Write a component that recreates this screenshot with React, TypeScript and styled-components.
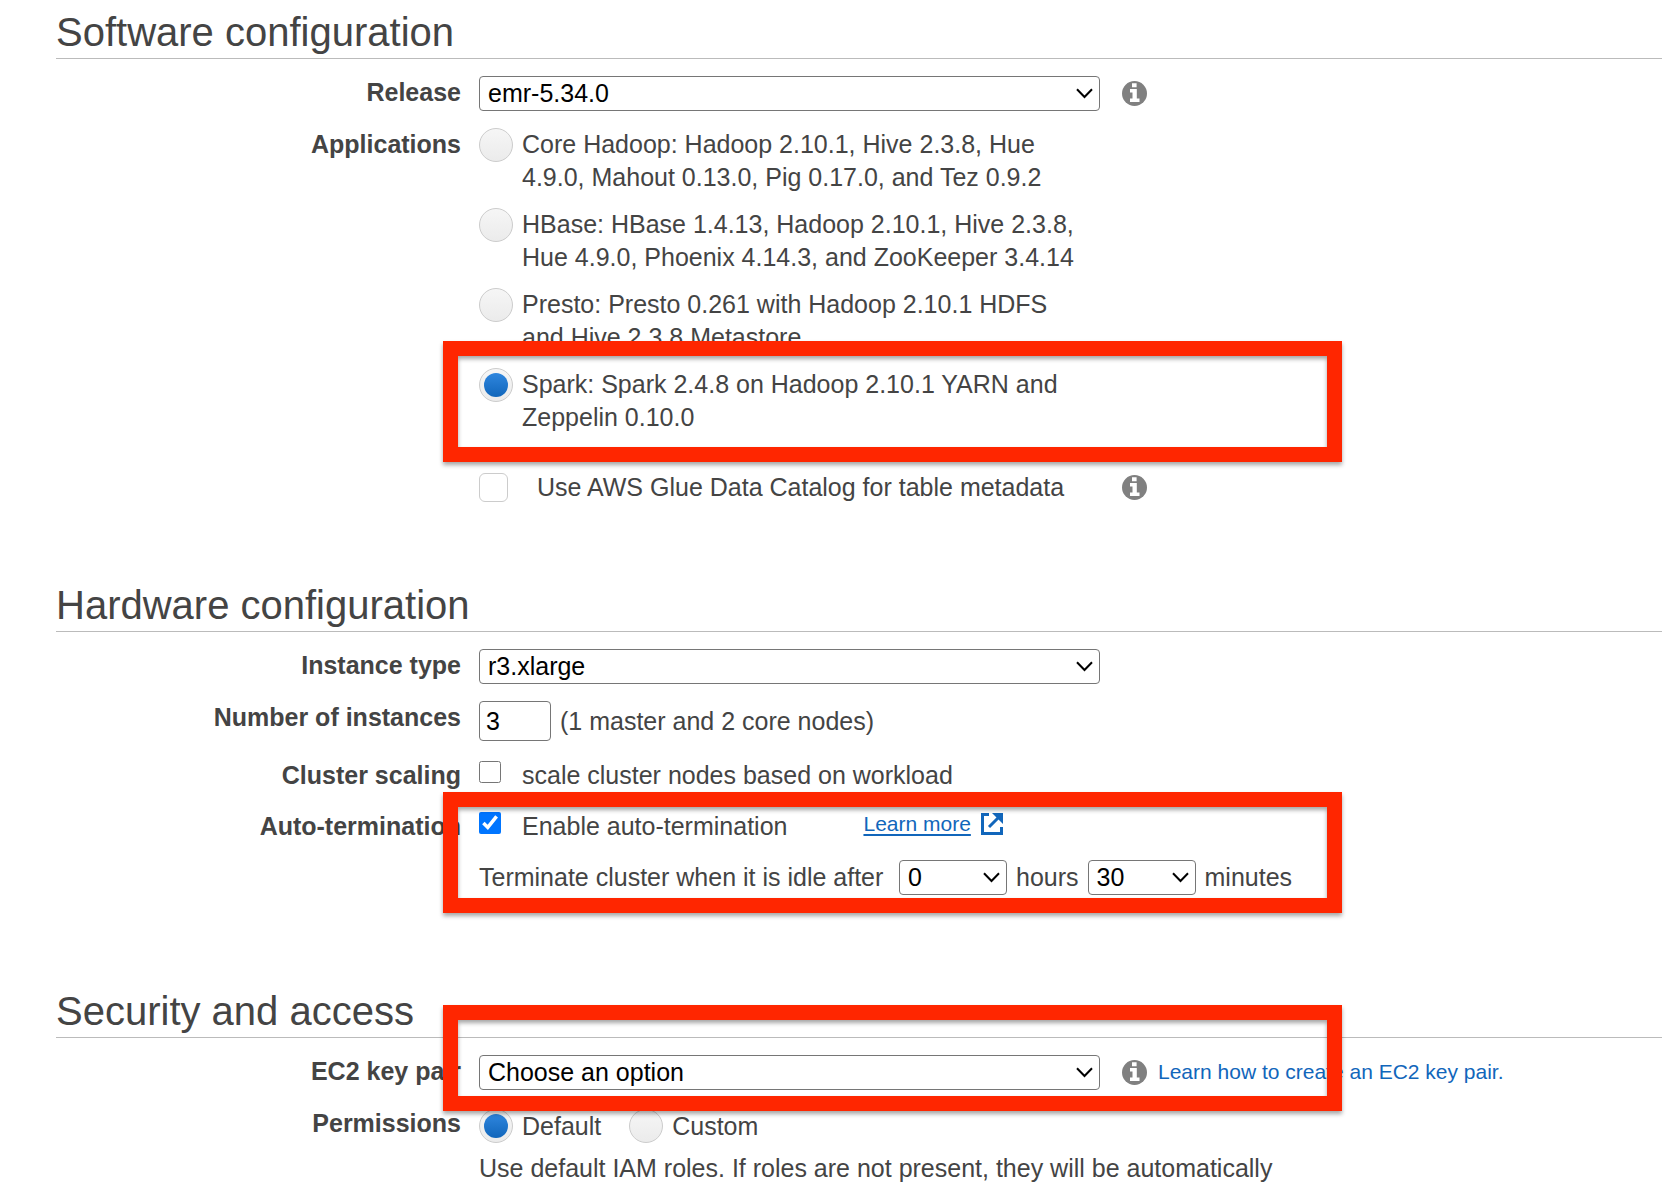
import React from "react";
import styled, { createGlobalStyle, css } from "styled-components";

const ink = "#444";
const blue = "#1166bb";

const GlobalStyle = createGlobalStyle`
  *, *::before, *::after { box-sizing: border-box; }
  body {
    margin: 0;
    background: #fff;
    color: ${ink};
    font: 25px/33px "Liberation Sans", Arial, sans-serif;
  }
`;

const Page = styled.main`
  display: flex;
  flex-direction: column;
  gap: 58px;
  padding: 7px 0 0 56px;
  overflow-x: hidden;
`;

const Section = styled.section`
  display: flex;
  flex-direction: column;
`;

const Heading = styled.h2`
  margin: 0 0 17px;
  padding-bottom: 1px;
  border-bottom: 1px solid #bbb;
  font-size: 40px;
  font-weight: 400;
  line-height: 50px;
`;

const Row = styled.div`
  display: grid;
  grid-template-columns: 405px minmax(0, 1fr);
  column-gap: 18px;
  padding-bottom: 18px;
`;

const RowLabel = styled.label`
  font-weight: 700;
  line-height: 33px;
  text-align: right;
`;

const Field = styled.div`
  position: relative;
`;

const Highlight = styled.div<{ $top: number; $height: number }>`
  position: absolute;
  z-index: 1;
  top: ${(p) => p.$top}px;
  left: -36px;
  width: 899px;
  height: ${(p) => p.$height}px;
  border: 15px solid #ff2600;
  filter: drop-shadow(0 3px 2px rgba(0, 0, 0, 0.35));
  pointer-events: none;
`;

const Inline = styled.div<{ $gap: number }>`
  display: flex;
  align-items: center;
  gap: ${(p) => p.$gap}px;
`;

const SelectBox = styled.span<{ $width: number; $height: number }>`
  display: grid;
  flex: none;
  align-items: center;
  width: ${(p) => p.$width}px;
  height: ${(p) => p.$height}px;
  > * { grid-area: 1 / 1; }
  > svg { justify-self: end; margin-right: 7px; pointer-events: none; }
`;

const controlBox = css`
  border: 1px solid #767676;
  border-radius: 4px;
  background: #fff;
  color: #000;
  font: inherit;
`;

const NativeSelect = styled.select`
  ${controlBox}
  appearance: none;
  width: 100%;
  height: 100%;
  padding: 0 28px 0 8px;
`;

const NumberInput = styled.input`
  ${controlBox}
  width: 72px;
  height: 40px;
  padding: 0 6px;
`;

const RadioInput = styled.input`
  appearance: none;
  display: grid;
  place-items: center;
  flex: none;
  width: 34px;
  height: 34px;
  margin: 0;
  border: 1px solid #ccc;
  border-radius: 50%;
  background: linear-gradient(#f6f6f6, #ebebeb);
  &:checked::before {
    content: "";
    width: 24px;
    height: 24px;
    border-radius: 50%;
    background: linear-gradient(#2f86de, #1166bb);
  }
`;

const GlueCheckbox = styled.input`
  appearance: none;
  flex: none;
  width: 29px;
  height: 29px;
  margin: 0;
  border: 1px solid #ccc;
  border-radius: 6px;
  background: #fff;
`;

const SmallCheckbox = styled.input`
  flex: none;
  width: 22px;
  height: 22px;
  margin: 2px 0 0;
  accent-color: #0075ff;
`;

const Choices = styled.div`
  display: flex;
  flex-direction: column;
  gap: 14px;
  width: 608px;
`;

const Choice = styled.div`
  position: relative;
`;

const ChoiceLabel = styled.label`
  display: flex;
  align-items: flex-start;
  gap: 9px;
`;

const CheckLabel = styled.label`
  display: flex;
  align-items: flex-start;
  gap: 21px;
`;

const GlueRow = styled.div`
  display: flex;
  align-items: center;
  gap: 22px;
  margin-top: 37px;
`;

const GlueLabel = styled.label`
  display: flex;
  align-items: center;
  gap: 29px;
  width: 621px;
`;

const TerminationRow = styled.div`
  display: flex;
  align-items: flex-start;
  gap: 76px;
  margin-bottom: 17px;
`;

const IdleRow = styled(Inline)`
  padding-bottom: 15px;
`;

const IdleText = styled.span`
  min-width: 411px;
`;

const Permissions = styled(Inline)`
  height: 38px;
  margin-bottom: 7px;
`;

const PermissionLabel = styled.label`
  display: flex;
  align-items: center;
  gap: 9px;
`;

const Link = styled.a`
  color: ${blue};
  font-size: 21px;
  line-height: 28px;
  text-decoration: none;
`;

const MoreLink = styled(Link)`
  display: flex;
  align-items: center;
  gap: 10px;
  > span {
    text-decoration: underline;
    text-decoration-thickness: 2px;
    text-underline-offset: 3px;
  }
`;

const KeyPairInfo = styled(Inline)`
  flex: none;
`;

const Note = styled.p`
  margin: 0;
`;

const Chevron = () => (
  <svg width="17" height="11" viewBox="0 0 17 11" fill="none" stroke="#000" strokeWidth="2" aria-hidden="true">
    <path d="M1 1.2 8.5 9 16 1.2" />
  </svg>
);

const InfoIcon = () => (
  <svg width="25" height="25" viewBox="0 0 25 25" role="img" aria-label="Information">
    <circle cx="12.5" cy="12.5" r="12.5" fill="#808080" />
    <path fill="#fff" d="M10 2.2h4.6v4H10zM8 7.9h6.8v9.5h2.7v3.7H8v-3.7h2.5v-6H8z" />
  </svg>
);

const ExternalIcon = () => (
  <svg width="22" height="22" viewBox="0 0 22 22" fill="none" stroke={blue} strokeWidth="3" aria-hidden="true">
    <path d="M8 1.5H1.5v19h19V14" />
    <path d="M8 14 18 4" />
    <path d="M11 0h11v11l-3.5-3.5-4-4z" fill={blue} stroke="none" />
  </svg>
);

type SelectProps = { id?: string; label?: string; width?: number; height?: number; option: string };

const Select = ({ id, label, width = 621, height = 34, option }: SelectProps) => (
  <SelectBox $width={width} $height={height}>
    <NativeSelect id={id} aria-label={label}>
      <option>{option}</option>
    </NativeSelect>
    <Chevron />
  </SelectBox>
);

const applications = [
  { id: "hadoop", text: "Core Hadoop: Hadoop 2.10.1, Hive 2.3.8, Hue 4.9.0, Mahout 0.13.0, Pig 0.17.0, and Tez 0.9.2" },
  { id: "hbase", text: "HBase: HBase 1.4.13, Hadoop 2.10.1, Hive 2.3.8, Hue 4.9.0, Phoenix 4.14.3, and ZooKeeper 3.4.14" },
  { id: "presto", text: "Presto: Presto 0.261 with Hadoop 2.10.1 HDFS and Hive 2.3.8 Metastore" },
  { id: "spark", text: "Spark: Spark 2.4.8 on Hadoop 2.10.1 YARN and Zeppelin 0.10.0" },
];

export default function App() {
  return (
    <>
      <GlobalStyle />
      <Page>
        <Section>
          <Heading>Software configuration</Heading>
          <Row>
            <RowLabel htmlFor="release">Release</RowLabel>
            <Inline $gap={22}>
              <Select id="release" option="emr-5.34.0" />
              <InfoIcon />
            </Inline>
          </Row>
          <Row>
            <RowLabel as="span" id="applications">Applications</RowLabel>
            <Field>
              <Choices role="radiogroup" aria-labelledby="applications">
                {applications.map((app) => (
                  <Choice key={app.id}>
                    <ChoiceLabel>
                      <RadioInput type="radio" name="application" defaultChecked={app.id === "spark"} />
                      <span>{app.text}</span>
                    </ChoiceLabel>
                    {app.id === "spark" && <Highlight $top={-27} $height={121} />}
                  </Choice>
                ))}
              </Choices>
              <GlueRow>
                <GlueLabel>
                  <GlueCheckbox type="checkbox" />
                  <span>Use AWS Glue Data Catalog for table metadata</span>
                </GlueLabel>
                <InfoIcon />
              </GlueRow>
            </Field>
          </Row>
        </Section>

        <Section>
          <Heading>Hardware configuration</Heading>
          <Row>
            <RowLabel htmlFor="instance-type">Instance type</RowLabel>
            <Field>
              <Select id="instance-type" option="r3.xlarge" />
            </Field>
          </Row>
          <Row>
            <RowLabel htmlFor="instances">Number of instances</RowLabel>
            <Inline $gap={9}>
              <NumberInput id="instances" type="text" inputMode="numeric" defaultValue="3" />
              <span>(1 master and 2 core nodes)</span>
            </Inline>
          </Row>
          <Row>
            <RowLabel htmlFor="scaling">Cluster scaling</RowLabel>
            <CheckLabel>
              <SmallCheckbox id="scaling" type="checkbox" />
              <span>scale cluster nodes based on workload</span>
            </CheckLabel>
          </Row>
          <Row>
            <RowLabel htmlFor="termination">Auto-termination</RowLabel>
            <Field>
              <TerminationRow>
                <CheckLabel>
                  <SmallCheckbox id="termination" type="checkbox" defaultChecked />
                  <span>Enable auto-termination</span>
                </CheckLabel>
                <MoreLink href="#auto-termination">
                  <span>Learn more</span>
                  <ExternalIcon />
                </MoreLink>
              </TerminationRow>
              <IdleRow $gap={9}>
                <IdleText>Terminate cluster when it is idle after</IdleText>
                <Select label="Idle hours" width={108} height={35} option="0" />
                <span>hours</span>
                <Select label="Idle minutes" width={108} height={35} option="30" />
                <span>minutes</span>
              </IdleRow>
              <Highlight $top={-18} $height={121} />
            </Field>
          </Row>
        </Section>

        <Section>
          <Heading>Security and access</Heading>
          <Row>
            <RowLabel htmlFor="key-pair">EC2 key pair</RowLabel>
            <Field>
              <Inline $gap={22}>
                <Select id="key-pair" option="Choose an option" />
                <KeyPairInfo $gap={11}>
                  <InfoIcon />
                  <Link href="#key-pair">Learn how to create an EC2 key pair.</Link>
                </KeyPairInfo>
              </Inline>
              <Highlight $top={-50} $height={106} />
            </Field>
          </Row>
          <Row>
            <RowLabel as="span" id="permissions">Permissions</RowLabel>
            <Field>
              <Permissions $gap={28} role="radiogroup" aria-labelledby="permissions">
                <PermissionLabel>
                  <RadioInput type="radio" name="permissions" defaultChecked />
                  <span>Default</span>
                </PermissionLabel>
                <PermissionLabel>
                  <RadioInput type="radio" name="permissions" />
                  <span>Custom</span>
                </PermissionLabel>
              </Permissions>
              <Note>Use default IAM roles. If roles are not present, they will be automatically</Note>
            </Field>
          </Row>
        </Section>
      </Page>
    </>
  );
}
